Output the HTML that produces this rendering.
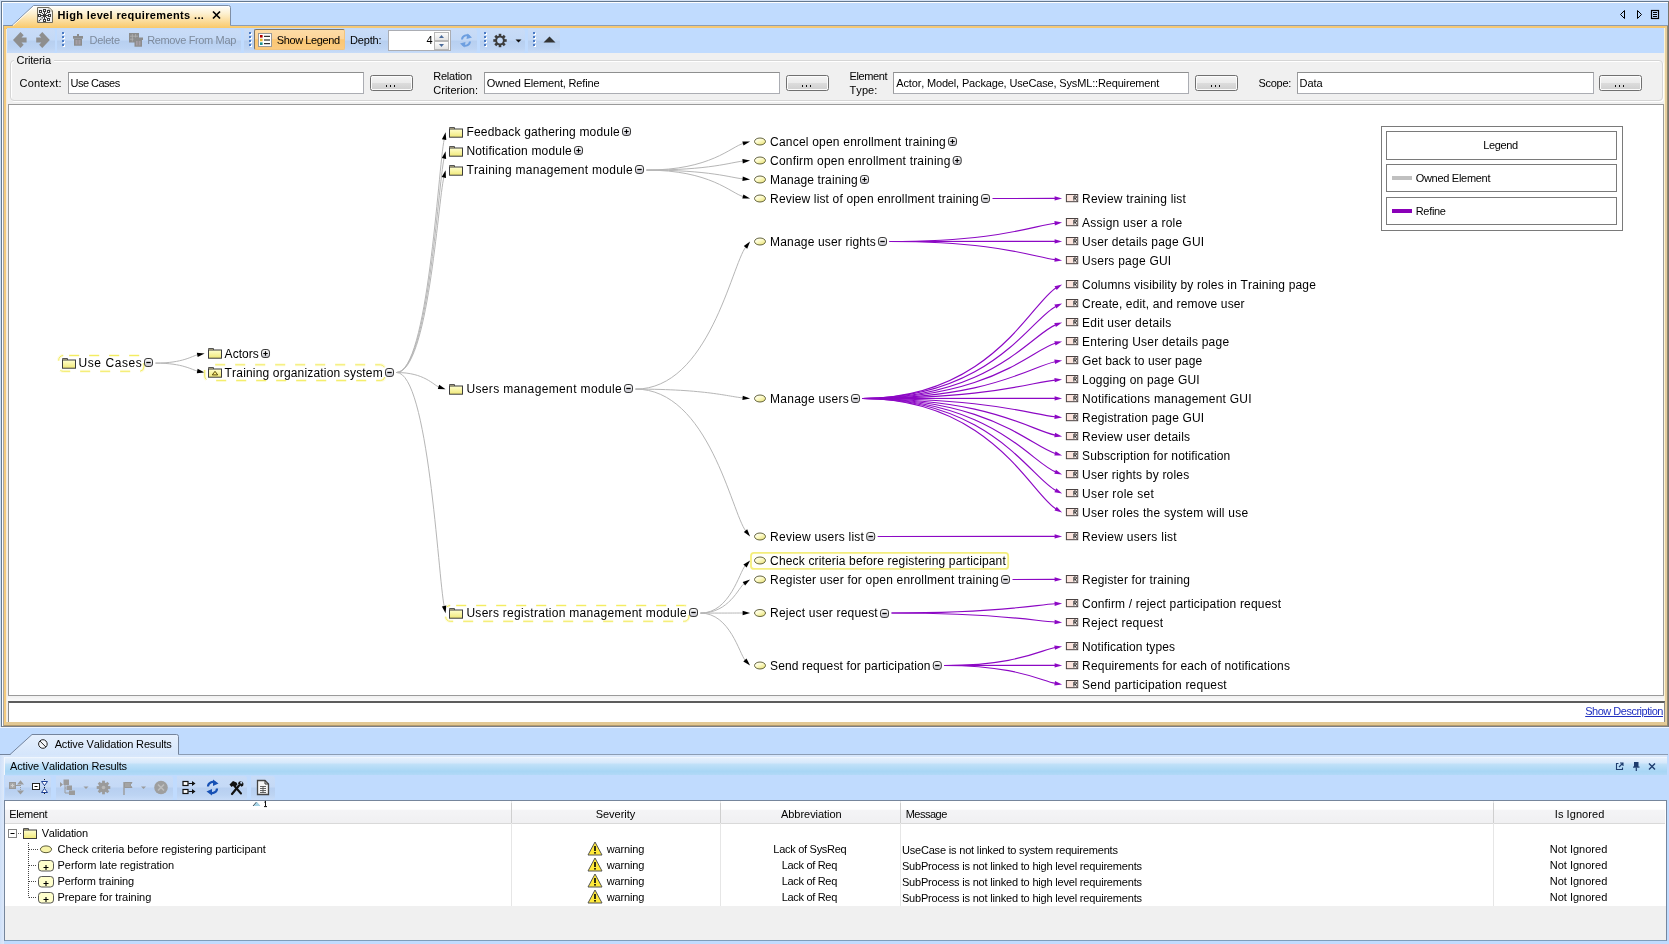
<!DOCTYPE html>
<html><head><meta charset="utf-8"><title>High level requirements</title>
<style>
*{box-sizing:border-box;margin:0;padding:0}
html,body{width:1669px;height:944px;overflow:hidden}
body{font-kerning:none;background:#c0dbfe;font-family:"Liberation Sans",sans-serif;font-size:11px;color:#000;position:relative}
.a{position:absolute}
.t{position:absolute;white-space:nowrap;line-height:14px;height:14px}
svg{position:absolute;overflow:visible}
svg.dg text{font-family:"Liberation Sans",sans-serif;font-size:12px;fill:#000}
.inp{position:absolute;height:22px;background:#fff;border:1px solid #abadb3;border-top-color:#8e8f8f;border-left-color:#9a9b9d}
.inp span{position:absolute;left:2px;top:3px;line-height:14px;white-space:nowrap}
.btn{position:absolute;width:43px;height:16px;border:1px solid #707070;border-radius:2.5px;background:linear-gradient(#f4f4f4 0,#ebebeb 48%,#dcdcdc 52%,#cfcfcf 100%);box-shadow:inset 0 0 0 1px #fbfbfb}
.btn i{position:absolute;left:15px;top:9px;width:11px;height:2px;background:repeating-linear-gradient(90deg,#111 0,#111 1.4px,transparent 1.4px,transparent 4px)}
.sep{position:absolute;width:3px;height:16px;background-image:repeating-linear-gradient(180deg,#4a7ac4 0,#4a7ac4 2px,transparent 2px,transparent 4px),repeating-linear-gradient(180deg,#fff 0,#fff 2px,transparent 2px,transparent 4px);background-position:0 0,1px 1px;background-size:2px 15px,2px 15px;background-repeat:no-repeat}
.dis{color:#7d8a9c}
#w{position:absolute;left:0;top:0;width:1669px;height:944px;will-change:transform}
</style></head><body><div id="w">

<!-- outer frame of document pane -->
<div class="a" style="left:0;top:0;width:1669px;height:1px;background:#d3e1f4"></div>
<div class="a" style="left:0;top:0;width:1px;height:727px;background:#cfdff3"></div>
<div class="a" style="left:1px;top:1px;width:1668px;height:726px;border:1px solid #64788f;border-bottom-color:#7b7f86;border-right-color:#77746c"></div>
<div class="a" style="left:2px;top:2px;width:1666px;height:1px;background:#fff"></div>
<div class="a" style="left:2px;top:2px;width:1px;height:724px;background:#fff"></div>
<!-- tab strip bottom line -->
<div class="a" style="left:3px;top:25px;width:1665px;height:1px;background:#8c9db4"></div>
<!-- orange frame -->
<div class="a" style="left:3px;top:26px;width:1665px;height:700px;border-style:solid;border-width:2px 4px 4px 4px;border-color:#f6c873 #e6cf9c #e2c894 #f2c97e;background:#f0f0f0"></div>
<div class="a" style="left:3px;top:26px;width:1px;height:700px;background:#a7a7a7"></div>
<div class="a" style="left:1667px;top:26px;width:1px;height:700px;background:#8f8672"></div>
<div class="a" style="left:1664px;top:28px;width:1px;height:694px;background:#fdf5d8"></div>
<div class="a" style="left:4px;top:725px;width:1663px;height:1px;background:#b39b6e"></div>
<div class="a" style="left:6px;top:28px;width:1px;height:694px;background:#f8ecd8"></div>
<!-- tab -->
<svg style="left:0;top:0" width="260" height="30" viewBox="0 0 260 30">
<defs><linearGradient id="tg" x1="0" y1="0" x2="0" y2="1"><stop offset="0" stop-color="#ffffff"/><stop offset="0.35" stop-color="#fdf0cf"/><stop offset="1" stop-color="#f9c662"/></linearGradient></defs>
<path d="M4 29V26H12L33.5 5.5H228.5Q230.5 5.5 230.5 7.5V26H260V29Z" fill="url(#tg)"/>
<path d="M3.5 25.5H12L33.5 5.5H228.5Q230.5 5.5 230.5 7.5V25.5" fill="none" stroke="#7f8fa6" stroke-width="1"/>
<path d="M13 25.5L34 6.5H229" fill="none" stroke="#ffffff" stroke-width="1" opacity="0.9"/>
<!-- relation map icon -->
<g transform="translate(37,7)">
<path d="M0.500 0.500H12L15.500 4V15.500H0.500Z" fill="#efefef" stroke="#706c5c" stroke-width="1"/>
<path d="M12 0.500V4H15.500Z" fill="#fff" stroke="#8a8676" stroke-width="0.800"/>
<g fill="none" stroke="#3a3a3a" stroke-width="1"><path d="M7.500 4V13M3 8.500H12M4.500 5.500L10.500 11.500M10.500 5.500L7.500 8.500"/><path d="M7 9L1 15" stroke="#222" stroke-width="1.100" stroke-dasharray="1.200 0.800"/></g>
<g fill="#fff" stroke="#3a3a3a" stroke-width="1">
<rect x="6.500" y="2.500" width="2" height="2"/><rect x="2.500" y="3.500" width="2" height="2"/><rect x="10.500" y="3.500" width="2" height="2"/>
<rect x="1.500" y="7.500" width="2" height="2"/><rect x="11.500" y="7.500" width="2" height="2"/>
<rect x="6.500" y="12.500" width="2" height="2"/><rect x="10.500" y="11.500" width="2" height="2"/></g>
<rect x="6" y="7" width="3" height="3" fill="#3a3a3a"/>
</g>
<path d="M213 11.5L220 18.5M220 11.5L213 18.5" stroke="#000" stroke-width="1.7" fill="none"/>
</svg>
<div class="t" style="left:57.40px;top:7.7px;letter-spacing:0.368px;font-weight:bold;">High level requirements ...</div>
<!-- tab strip right icons -->
<svg style="left:1615px;top:6px" width="50" height="16" viewBox="0 0 50 16">
<path d="M9.5 4.5V12.5L5.5 8.5Z" fill="none" stroke="#000" stroke-width="1"/>
<path d="M22.5 4.5V12.5L26.5 8.5Z" fill="none" stroke="#000" stroke-width="1"/>
<rect x="36.5" y="4.5" width="7" height="8" fill="none" stroke="#000" stroke-width="1.2"/>
<path d="M38 6.5H42M38 8.5H42M38 10.5H42" stroke="#000" stroke-width="1"/>
</svg>
<!-- toolbar -->
<div class="a" style="left:7px;top:28px;width:1657px;height:25px;background:#c0dbfe"></div>
<div class="a tb" style="left:8px;top:29px;width:47px"></div>
<div class="a tb" style="left:57px;top:29px;width:184px"></div>
<div class="a tb" style="left:244px;top:29px;width:233px"></div>
<div class="a tb" style="left:480px;top:29px;width:45px"></div>
<div class="a tb" style="left:528px;top:29px;width:32px"></div>
<style>.tb{height:24px;border-radius:0 3px 3px 0;background:linear-gradient(#c9dcf7 0,#c4d9f6 46%,#b7cff0 50%,#bdd4f3 80%,#c8dcf8 100%)}</style>
<div class="sep" style="left:62px;top:32px"></div>
<div class="sep" style="left:249px;top:32px"></div>
<div class="sep" style="left:484px;top:32px"></div>
<div class="sep" style="left:533px;top:32px"></div>
<svg style="left:8px;top:29px" width="560" height="24" viewBox="0 0 560 24">
<!-- nav arrows -->
<path d="M5 11L12.500 3L15.700 6.300L13.500 8.500H18.600V13.500H13.500L15.700 15.700L12.500 19Z" fill="#8e8e8e"/>
<path d="M41.800 11L34.300 3L31.100 6.300L33.300 8.500H28.200V13.500H33.300L31.100 15.700L34.300 19Z" fill="#8e8e8e"/>
<!-- trash -->
<g fill="#8c8c8c"><rect x="65" y="7" width="10" height="2.700"/><rect x="69" y="5" width="2" height="2"/><path d="M66 9.700H74V16.700H66Z"/></g><rect x="67.500" y="11" width="5" height="4.500" fill="#a59ea6"/>
<path d="M70 11V15.500" stroke="#8c8c8c" stroke-width="1"/>
<!-- remove from map -->
<g fill="#8c8c8c"><rect x="121" y="4" width="10" height="9.500"/><rect x="125.500" y="8.500" width="9.500" height="2.500"/><rect x="126.500" y="11" width="7.500" height="6.700"/></g><rect x="128" y="12" width="4.500" height="4.500" fill="#a59ea6"/><path d="M130.200 12V16.500" stroke="#8c8c8c"/>
<path d="M122 7.200H130M122 10.200H125.500M124.300 5V12.500M127.600 5V8.500" stroke="#b3b3b3" stroke-width="0.800"/>
<!-- gear -->
<g transform="translate(492,11.500)" fill="#3c3c3c"><circle r="4.800"/><g id="teeth"><rect x="-1.300" y="-6.700" width="2.600" height="13.400"/><rect x="-6.700" y="-1.300" width="13.400" height="2.600"/></g><use href="#teeth" transform="rotate(45)"/><circle r="2.900" fill="#c1d7f5"/></g>
<path d="M507.5 10.5H513.5L510.5 13.5Z" fill="#111"/>
<path d="M535.5 13.5H547.5L541.5 7.5Z" fill="#333"/>
<!-- refresh disabled -->
<g fill="none" stroke="#6d9fe0" stroke-width="2"><path d="M454 10.5A4.5 4.5 0 0 1 461.5 7.5"/><path d="M462 12.5A4.5 4.5 0 0 1 454.5 15.5"/></g>
<path d="M459.5 4.5L464 8.5L458.5 10Z" fill="#6d9fe0"/><path d="M456.5 18.5L452 14.5L457.5 13Z" fill="#6d9fe0"/>
</svg>
<div class="t dis" style="left:89.50px;top:32.6px;letter-spacing:-0.259px;">Delete</div>
<div class="t dis" style="left:147.20px;top:32.6px;letter-spacing:-0.360px;">Remove From Map</div>
<!-- show legend button -->
<div class="a" style="left:254px;top:29px;width:91px;height:21px;border:1px solid;border-color:#7c7568 #f3c47c #f3c47c #7c7568;border-radius:2px;background:linear-gradient(#fddcA6 0,#fdd59a 45%,#fbc672 52%,#fbcb80 100%)"></div>
<svg style="left:258px;top:33px" width="14" height="14" viewBox="0 0 14 14">
<rect x="0.500" y="0.500" width="13" height="13" fill="#fff" stroke="#9a9a9a"/>
<rect x="2" y="2" width="2.600" height="2.600" fill="#b00000"/><rect x="2" y="5.700" width="2.600" height="2.600" fill="#e8b830"/><rect x="2" y="9.400" width="2.600" height="2.600" fill="#1f9090"/>
<path d="M6 3.300H12M6 7H12M6 10.700H12" stroke="#000" stroke-width="1"/>
</svg>
<div class="t" style="left:276.70px;top:32.8px;letter-spacing:-0.378px;">Show Legend</div>
<div class="t" style="left:350.00px;top:32.8px;letter-spacing:-0.162px;">Depth:</div>
<div class="a" style="left:388px;top:30px;width:63px;height:21px;background:#fff;border:1px solid #abadb3"></div>
<div class="t" style="left:426.60px;top:32.8px;letter-spacing:-0.718px;">4</div>
<div class="a" style="left:434px;top:32px;width:15px;height:9px;border:1px solid #b8b8b8;background:linear-gradient(#fcfcfc,#e4e4e4)"></div>
<div class="a" style="left:434px;top:41px;width:15px;height:9px;border:1px solid #b8b8b8;background:linear-gradient(#fcfcfc,#e4e4e4)"></div>
<svg style="left:434px;top:32px" width="15" height="18" viewBox="0 0 15 18"><path d="M5 6L7.5 3L10 6Z" fill="#4b6b9a"/><path d="M5 12L7.5 15L10 12Z" fill="#4b6b9a"/></svg>
<!-- criteria panel -->
<div class="a" style="left:7px;top:53px;width:1657px;height:51px;background:#f0f0f0"></div>
<div class="a" style="left:10px;top:60px;width:1653px;height:41px;border:1px solid #d5d5d5;border-radius:4px;box-shadow:inset 1px 1px 0 #fff,1px 1px 0 #fff"></div>
<div class="a" style="left:14px;top:55px;width:40px;height:10px;background:#f0f0f0"></div><div class="t" style="left:16.60px;top:52.8px;letter-spacing:-0.150px;">Criteria</div>
<div class="t" style="left:19.60px;top:75.6px;letter-spacing:0.134px;">Context:</div>
<div class="inp" style="left:68px;top:72px;width:296px"></div><div class="t" style="left:70.50px;top:75.8px;letter-spacing:-0.512px;">Use Cases</div>
<div class="btn" style="left:370px;top:75px"><i></i></div>
<div class="t" style="left:433.25px;top:69.0px;letter-spacing:-0.230px;">Relation</div>
<div class="t" style="left:433.25px;top:82.8px;letter-spacing:0.014px;">Criterion:</div>
<div class="inp" style="left:484px;top:72px;width:296px"></div><div class="t" style="left:486.75px;top:75.8px;letter-spacing:-0.171px;">Owned Element, Refine</div>
<div class="btn" style="left:786px;top:75px"><i></i></div>
<div class="t" style="left:849.50px;top:69.0px;letter-spacing:-0.392px;">Element</div>
<div class="t" style="left:849.50px;top:82.8px;letter-spacing:0.087px;">Type:</div>
<div class="inp" style="left:893px;top:72px;width:296px"></div><div class="t" style="left:896.25px;top:75.8px;letter-spacing:-0.158px;">Actor, Model, Package, UseCase, SysML::Requirement</div>
<div class="btn" style="left:1195px;top:75px"><i></i></div>
<div class="t" style="left:1258.50px;top:76.0px;letter-spacing:-0.289px;">Scope:</div>
<div class="inp" style="left:1297px;top:72px;width:297px"></div><div class="t" style="left:1299.50px;top:75.8px;letter-spacing:-0.012px;">Data</div>
<div class="btn" style="left:1599px;top:75px"><i></i></div>
<!-- diagram panel -->
<div class="a" style="left:8px;top:104px;width:1656px;height:592px;background:#fff;border:1px solid #9a9a9a"></div>
<div class="a" style="left:7px;top:696px;width:1657px;height:5px;background:linear-gradient(#f0f0f0,#fafafa)"></div>
<div class="a" style="left:8px;top:701px;width:1657px;height:21px;background:#fff;border-top:2px solid #5c5c5c;border-left:1px solid #8a8a8a;border-right:1px solid #8a8a8a"></div>
<div class="t" style="left:1585.20px;top:703.8px;letter-spacing:-0.486px;color:#1f2fc0;text-decoration:underline;">Show Description</div>

<svg class="dg" style="left:9px;top:105px" width="1654" height="590" viewBox="0 0 1654 590">
<defs>
<linearGradient id="gy" x1="0" y1="0" x2="0" y2="1"><stop offset="0" stop-color="#ffffd0"/><stop offset="1" stop-color="#f0e878"/></linearGradient>
<linearGradient id="gu" x1="0.1" y1="0" x2="0.9" y2="1"><stop offset="0" stop-color="#ffffff"/><stop offset="0.45" stop-color="#fcfac8"/><stop offset="1" stop-color="#e6df70"/></linearGradient>
<linearGradient id="gt" x1="0" y1="0" x2="0" y2="1"><stop offset="0" stop-color="#ffffff"/><stop offset="1" stop-color="#c8c8d0"/></linearGradient>
<g id="pk"><path d="M0.5 2V0.8H5.5V2.3" fill="#f5e6a0" stroke="#555" stroke-width="1"/><rect x="0.5" y="2.3" width="13" height="8.2" fill="url(#gy)" stroke="#3c3c3c" stroke-width="1"/></g>
<g id="md"><path d="M0.5 2V0.8H5.5V2.3" fill="#f5e6a0" stroke="#555" stroke-width="1"/><rect x="0.5" y="2.3" width="13" height="8.2" fill="url(#gy)" stroke="#3c3c3c" stroke-width="1"/><path d="M4.3 8.2L7 4.6L9.7 8.2Z" fill="#fff27a" stroke="#4a3a00" stroke-width="0.9"/></g>
<g id="ucs"><ellipse cx="6.5" cy="4.5" rx="5.5" ry="3.5" fill="url(#gu)" stroke="#4a4a22" stroke-width="0.85"/></g>
<g id="rq"><rect x="0.5" y="0.5" width="11.3" height="7.2" fill="#fce5de" stroke="#4a4242" stroke-width="1"/><rect x="7" y="1.2" width="4.2" height="5.8" fill="#fff6f3"/><path d="M8 6.600V2H9.600Q10.600 2 10.600 3Q10.600 4.100 9.600 4.100H8M9.300 4.100L10.700 6.600" fill="none" stroke="#1c1c1c" stroke-width="0.950"/></g>
<g id="tm"><rect x="0.5" y="0.5" width="8" height="8" rx="2.6" fill="url(#gt)" stroke="#333" stroke-width="1"/><path d="M2.3 4.5H6.7" stroke="#000" stroke-width="1.3"/></g>
<g id="tp"><rect x="0.5" y="0.5" width="8" height="8" rx="2.6" fill="url(#gt)" stroke="#333" stroke-width="1"/><path d="M2.3 4.5H6.7M4.5 2.3V6.7" stroke="#000" stroke-width="1.2"/></g>
</defs>
<path d="M146.5 258.1C174.3 258.1 183.0 250.9 188.7 249.8" fill="none" stroke="#b6b6b6" stroke-width="1"/>
<polygon points="195.6,248.4 188.7,252.0 187.8,247.7" fill="#000"/>
<path d="M146.5 258.1C174.3 258.1 183.0 265.0 188.7 266.1" fill="none" stroke="#b6b6b6" stroke-width="1"/>
<polygon points="195.6,267.4 187.8,268.2 188.6,263.8" fill="#000"/>
<path d="M387.5 267.5C419.2 267.5 429.1 63.8 435.2 34.2" fill="none" stroke="#b6b6b6" stroke-width="1"/>
<polygon points="436.6,27.3 437.3,35.1 432.9,34.2" fill="#000"/>
<path d="M387.5 267.5C419.1 267.5 429.0 80.4 435.1 53.1" fill="none" stroke="#b6b6b6" stroke-width="1"/>
<polygon points="436.6,46.3 437.1,54.1 432.8,53.1" fill="#000"/>
<path d="M387.5 267.5C419.1 267.5 428.9 97.0 434.9 72.1" fill="none" stroke="#b6b6b6" stroke-width="1"/>
<polygon points="436.6,65.3 437.0,73.1 432.7,72.1" fill="#000"/>
<path d="M387.5 267.5C415.5 267.5 424.3 280.1 430.0 282.0" fill="none" stroke="#b6b6b6" stroke-width="1"/>
<polygon points="436.6,284.3 428.8,284.0 430.2,279.8" fill="#000"/>
<path d="M387.5 267.5C419.2 267.5 429.2 471.8 435.2 501.4" fill="none" stroke="#b6b6b6" stroke-width="1"/>
<polygon points="436.6,508.3 432.9,501.4 437.3,500.5" fill="#000"/>
<path d="M637.5 65.1C701.7 65.1 721.8 41.8 734.4 38.4" fill="none" stroke="#b6b6b6" stroke-width="1"/>
<polygon points="741.1,36.5 734.5,40.6 733.3,36.4" fill="#000"/>
<path d="M637.5 65.1C701.6 65.1 721.6 57.3 734.1 56.1" fill="none" stroke="#b6b6b6" stroke-width="1"/>
<polygon points="741.1,55.5 733.8,58.4 733.4,54.0" fill="#000"/>
<path d="M637.5 65.1C701.6 65.1 721.6 72.7 734.1 73.9" fill="none" stroke="#b6b6b6" stroke-width="1"/>
<polygon points="741.1,74.5 733.4,76.0 733.8,71.6" fill="#000"/>
<path d="M637.5 65.1C701.7 65.1 721.8 88.2 734.3 91.6" fill="none" stroke="#b6b6b6" stroke-width="1"/>
<polygon points="741.1,93.5 733.3,93.6 734.4,89.4" fill="#000"/>
<path d="M626.5 284.1C699.8 284.1 722.8 160.1 736.8 142.0" fill="none" stroke="#b6b6b6" stroke-width="1"/>
<polygon points="741.1,136.5 738.2,143.8 734.8,141.1" fill="#000"/>
<path d="M626.5 284.1C697.9 284.1 720.2 291.8 734.1 292.9" fill="none" stroke="#b6b6b6" stroke-width="1"/>
<polygon points="741.1,293.5 733.4,295.1 733.8,290.7" fill="#000"/>
<path d="M626.5 284.1C699.8 284.1 722.7 407.9 736.8 426.0" fill="none" stroke="#b6b6b6" stroke-width="1"/>
<polygon points="741.1,431.5 734.8,426.9 738.2,424.2" fill="#000"/>
<path d="M691.5 508.1C721.1 508.1 730.4 466.8 736.3 460.6" fill="none" stroke="#b6b6b6" stroke-width="1"/>
<polygon points="741.1,455.5 737.6,462.5 734.4,459.4" fill="#000"/>
<path d="M691.5 508.1C720.4 508.1 729.5 482.4 735.3 478.4" fill="none" stroke="#b6b6b6" stroke-width="1"/>
<polygon points="741.1,474.5 736.1,480.5 733.7,476.9" fill="#000"/>
<path d="M691.5 508.1C719.6 508.1 728.3 508.0 734.1 508.0" fill="none" stroke="#b6b6b6" stroke-width="1"/>
<polygon points="741.1,508.0 733.6,510.2 733.6,505.8" fill="#000"/>
<path d="M691.5 508.1C721.1 508.1 730.4 549.2 736.3 555.4" fill="none" stroke="#b6b6b6" stroke-width="1"/>
<polygon points="741.1,560.5 734.3,556.6 737.5,553.5" fill="#000"/>
<path d="M983.5 93.5C1024.9 93.5 1037.8 93.4 1046.1 93.4" fill="none" stroke="#8c08c4" stroke-width="1.15"/>
<polygon points="1053.1,93.4 1045.6,95.6 1045.6,91.2" fill="#8c08c4"/>
<path d="M880.5 136.5C990.6 136.5 1025.0 120.5 1046.1 118.2" fill="none" stroke="#8c08c4" stroke-width="1.15"/>
<polygon points="1053.1,117.4 1045.9,120.4 1045.4,116.0" fill="#8c08c4"/>
<path d="M880.5 136.5C990.6 136.5 1025.0 136.4 1046.1 136.4" fill="none" stroke="#8c08c4" stroke-width="1.15"/>
<polygon points="1053.1,136.4 1045.6,138.6 1045.6,134.2" fill="#8c08c4"/>
<path d="M880.5 136.5C990.6 136.5 1025.0 152.3 1046.1 154.6" fill="none" stroke="#8c08c4" stroke-width="1.15"/>
<polygon points="1053.1,155.4 1045.4,156.8 1045.9,152.4" fill="#8c08c4"/>
<path d="M853.5 293.5C982.2 293.5 1022.5 196.9 1047.0 182.9" fill="none" stroke="#8c08c4" stroke-width="1.15"/>
<polygon points="1053.1,179.4 1047.7,185.0 1045.5,181.2" fill="#8c08c4"/>
<path d="M853.5 293.5C982.1 293.5 1022.2 213.1 1046.8 201.4" fill="none" stroke="#8c08c4" stroke-width="1.15"/>
<polygon points="1053.1,198.4 1047.3,203.6 1045.4,199.6" fill="#8c08c4"/>
<path d="M853.5 293.5C981.9 293.5 1022.0 229.3 1046.6 219.9" fill="none" stroke="#8c08c4" stroke-width="1.15"/>
<polygon points="1053.1,217.4 1046.9,222.1 1045.3,218.0" fill="#8c08c4"/>
<path d="M853.5 293.5C981.8 293.5 1021.8 245.3 1046.4 238.3" fill="none" stroke="#8c08c4" stroke-width="1.15"/>
<polygon points="1053.1,236.4 1046.5,240.6 1045.3,236.3" fill="#8c08c4"/>
<path d="M853.5 293.5C981.7 293.5 1021.7 261.4 1046.2 256.7" fill="none" stroke="#8c08c4" stroke-width="1.15"/>
<polygon points="1053.1,255.4 1046.1,259.0 1045.3,254.6" fill="#8c08c4"/>
<path d="M853.5 293.5C981.6 293.5 1021.6 277.4 1046.1 275.1" fill="none" stroke="#8c08c4" stroke-width="1.15"/>
<polygon points="1053.1,274.4 1045.8,277.3 1045.4,272.9" fill="#8c08c4"/>
<path d="M853.5 293.5C981.6 293.5 1021.6 293.4 1046.1 293.4" fill="none" stroke="#8c08c4" stroke-width="1.15"/>
<polygon points="1053.1,293.4 1045.6,295.6 1045.6,291.2" fill="#8c08c4"/>
<path d="M853.5 293.5C981.6 293.5 1021.6 309.4 1046.1 311.7" fill="none" stroke="#8c08c4" stroke-width="1.15"/>
<polygon points="1053.1,312.4 1045.4,313.9 1045.8,309.5" fill="#8c08c4"/>
<path d="M853.5 293.5C981.7 293.5 1021.7 325.4 1046.2 330.1" fill="none" stroke="#8c08c4" stroke-width="1.15"/>
<polygon points="1053.1,331.4 1045.3,332.2 1046.1,327.8" fill="#8c08c4"/>
<path d="M853.5 293.5C981.8 293.5 1021.8 341.5 1046.4 348.5" fill="none" stroke="#8c08c4" stroke-width="1.15"/>
<polygon points="1053.1,350.4 1045.3,350.5 1046.5,346.2" fill="#8c08c4"/>
<path d="M853.5 293.5C981.9 293.5 1022.0 357.6 1046.6 366.9" fill="none" stroke="#8c08c4" stroke-width="1.15"/>
<polygon points="1053.1,369.4 1045.3,368.8 1046.9,364.7" fill="#8c08c4"/>
<path d="M853.5 293.5C982.1 293.5 1022.2 373.7 1046.8 385.4" fill="none" stroke="#8c08c4" stroke-width="1.15"/>
<polygon points="1053.1,388.4 1045.4,387.2 1047.3,383.2" fill="#8c08c4"/>
<path d="M853.5 293.5C982.2 293.5 1022.5 389.9 1047.0 403.9" fill="none" stroke="#8c08c4" stroke-width="1.15"/>
<polygon points="1053.1,407.4 1045.5,405.6 1047.7,401.8" fill="#8c08c4"/>
<path d="M868.7 431.5C986.6 431.5 1023.5 431.4 1046.1 431.4" fill="none" stroke="#8c08c4" stroke-width="1.15"/>
<polygon points="1053.1,431.4 1045.6,433.6 1045.6,429.2" fill="#8c08c4"/>
<path d="M1003.5 474.5C1031.6 474.5 1040.3 474.4 1046.1 474.4" fill="none" stroke="#8c08c4" stroke-width="1.15"/>
<polygon points="1053.1,474.4 1045.6,476.6 1045.6,472.2" fill="#8c08c4"/>
<path d="M882.5 508.0C991.2 508.0 1025.2 500.0 1046.1 498.8" fill="none" stroke="#8c08c4" stroke-width="1.15"/>
<polygon points="1053.1,498.4 1045.7,501.0 1045.5,496.6" fill="#8c08c4"/>
<path d="M882.5 508.0C991.2 508.0 1025.2 515.9 1046.1 517.0" fill="none" stroke="#8c08c4" stroke-width="1.15"/>
<polygon points="1053.1,517.4 1045.5,519.2 1045.7,514.8" fill="#8c08c4"/>
<path d="M935.3 560.5C1008.9 560.5 1031.9 544.8 1046.2 542.5" fill="none" stroke="#8c08c4" stroke-width="1.15"/>
<polygon points="1053.1,541.4 1046.0,544.8 1045.3,540.4" fill="#8c08c4"/>
<path d="M935.3 560.5C1008.8 560.5 1031.8 560.4 1046.1 560.4" fill="none" stroke="#8c08c4" stroke-width="1.15"/>
<polygon points="1053.1,560.4 1045.6,562.6 1045.6,558.2" fill="#8c08c4"/>
<path d="M935.3 560.5C1008.9 560.5 1031.9 576.0 1046.2 578.3" fill="none" stroke="#8c08c4" stroke-width="1.15"/>
<polygon points="1053.1,579.4 1045.3,580.4 1046.0,576.0" fill="#8c08c4"/>
<rect x="49.7" y="250.5" width="85.2" height="15.8" rx="4.5" fill="none" stroke="#fbf8b8" stroke-width="3" stroke-dasharray="10 10" stroke-dashoffset="-6" opacity="0.5"/>
<rect x="49.7" y="250.5" width="85.2" height="15.8" rx="4.5" fill="none" stroke="#f3ec62" stroke-width="1" stroke-dasharray="10 10" stroke-dashoffset="-6"/>
<use href="#pk" x="53.0" y="252.7"/>
<text x="69.6" y="261.7" textLength="63.1">Use Cases</text>
<use href="#tm" x="135.0" y="253.0"/>
<use href="#pk" x="199.0" y="242.7"/>
<text x="215.6" y="252.7" textLength="34.1">Actors</text>
<use href="#tp" x="252.0" y="244.0"/>
<rect x="195.7" y="259.8" width="180.2" height="15.8" rx="4.5" fill="none" stroke="#fbf8b8" stroke-width="3" stroke-dasharray="10 10" stroke-dashoffset="-6" opacity="0.5"/>
<rect x="195.7" y="259.8" width="180.2" height="15.8" rx="4.5" fill="none" stroke="#f3ec62" stroke-width="1" stroke-dasharray="10 10" stroke-dashoffset="-6"/>
<use href="#md" x="199.0" y="261.7"/>
<text x="215.6" y="271.7" textLength="158.1">Training organization system</text>
<use href="#tm" x="376.0" y="263.0"/>
<use href="#pk" x="440.0" y="21.7"/>
<text x="457.4" y="30.7" textLength="153.3">Feedback gathering module</text>
<use href="#tp" x="613.0" y="22.0"/>
<use href="#pk" x="440.0" y="40.7"/>
<text x="457.4" y="49.7" textLength="105.3">Notification module</text>
<use href="#tp" x="565.0" y="41.0"/>
<use href="#pk" x="440.0" y="59.7"/>
<text x="457.4" y="68.7" textLength="166.3">Training management module</text>
<use href="#tm" x="626.0" y="60.0"/>
<use href="#pk" x="440.0" y="278.7"/>
<text x="457.4" y="287.7" textLength="155.3">Users management module</text>
<use href="#tm" x="615.0" y="279.0"/>
<rect x="436.7" y="500.5" width="243.2" height="15.8" rx="4.5" fill="none" stroke="#fbf8b8" stroke-width="3" stroke-dasharray="10 10" stroke-dashoffset="-6" opacity="0.5"/>
<rect x="436.7" y="500.5" width="243.2" height="15.8" rx="4.5" fill="none" stroke="#f3ec62" stroke-width="1" stroke-dasharray="10 10" stroke-dashoffset="-6"/>
<use href="#pk" x="440.0" y="502.7"/>
<text x="457.4" y="511.7" textLength="220.3">Users registration management module</text>
<use href="#tm" x="680.0" y="503.0"/>
<use href="#ucs" x="744.5" y="32.0"/>
<text x="761.1" y="40.7" textLength="175.6">Cancel open enrollment training</text>
<use href="#tp" x="939.0" y="32.0"/>
<use href="#ucs" x="744.5" y="51.0"/>
<text x="761.1" y="59.7" textLength="180.3">Confirm open enrollment training</text>
<use href="#tp" x="943.7" y="51.0"/>
<use href="#ucs" x="744.5" y="70.0"/>
<text x="761.1" y="78.7" textLength="87.6">Manage training</text>
<use href="#tp" x="851.0" y="70.0"/>
<use href="#ucs" x="744.5" y="89.0"/>
<text x="761.1" y="97.7" textLength="208.6">Review list of open enrollment training</text>
<use href="#tm" x="972.0" y="89.0"/>
<use href="#ucs" x="744.5" y="132.0"/>
<text x="761.1" y="140.7" textLength="105.6">Manage user rights</text>
<use href="#tm" x="869.0" y="132.0"/>
<use href="#ucs" x="744.5" y="289.0"/>
<text x="761.1" y="297.7" textLength="78.6">Manage users</text>
<use href="#tm" x="842.0" y="289.0"/>
<use href="#ucs" x="744.5" y="427.0"/>
<text x="761.1" y="435.7" textLength="93.8">Review users list</text>
<use href="#tm" x="857.2" y="427.0"/>
<rect x="742.0" y="447.9" width="257.2" height="16" rx="3" fill="#fffffa" stroke="#f4ee7c" stroke-width="1.8"/>
<use href="#ucs" x="744.5" y="451.0"/>
<text x="761.1" y="459.7" textLength="235.7">Check criteria before registering participant</text>
<use href="#ucs" x="744.5" y="470.0"/>
<text x="761.1" y="478.7" textLength="228.6">Register user for open enrollment training</text>
<use href="#tm" x="992.0" y="470.0"/>
<use href="#ucs" x="744.5" y="503.5"/>
<text x="761.1" y="512.2" textLength="107.6">Reject user request</text>
<use href="#tm" x="871.0" y="504.0"/>
<use href="#ucs" x="744.5" y="556.0"/>
<text x="761.1" y="564.7" textLength="160.4">Send request for participation</text>
<use href="#tm" x="923.8" y="556.0"/>
<use href="#rq" x="1056.9" y="89.0"/>
<text x="1073.1" y="97.6" textLength="103.8">Review training list</text>
<use href="#rq" x="1056.9" y="113.0"/>
<text x="1073.1" y="121.6" textLength="100.1">Assign user a role</text>
<use href="#rq" x="1056.9" y="132.0"/>
<text x="1073.1" y="140.6" textLength="122.0">User details page GUI</text>
<use href="#rq" x="1056.9" y="151.0"/>
<text x="1073.1" y="159.6" textLength="89.1">Users page GUI</text>
<use href="#rq" x="1056.9" y="175.0"/>
<text x="1073.1" y="183.6" textLength="233.8">Columns visibility by roles in Training page</text>
<use href="#rq" x="1056.9" y="194.0"/>
<text x="1073.1" y="202.6" textLength="162.5">Create, edit, and remove user</text>
<use href="#rq" x="1056.9" y="213.0"/>
<text x="1073.1" y="221.6" textLength="89.1">Edit user details</text>
<use href="#rq" x="1056.9" y="232.0"/>
<text x="1073.1" y="240.6" textLength="147.0">Entering User details page</text>
<use href="#rq" x="1056.9" y="251.0"/>
<text x="1073.1" y="259.6" textLength="120.0">Get back to user page</text>
<use href="#rq" x="1056.9" y="270.0"/>
<text x="1073.1" y="278.6" textLength="117.6">Logging on page GUI</text>
<use href="#rq" x="1056.9" y="289.0"/>
<text x="1073.1" y="297.6" textLength="169.4">Notifications management GUI</text>
<use href="#rq" x="1056.9" y="308.0"/>
<text x="1073.1" y="316.6" textLength="122.1">Registration page GUI</text>
<use href="#rq" x="1056.9" y="327.0"/>
<text x="1073.1" y="335.6" textLength="108.0">Review user details</text>
<use href="#rq" x="1056.9" y="346.0"/>
<text x="1073.1" y="354.6" textLength="148.2">Subscription for notification</text>
<use href="#rq" x="1056.9" y="365.0"/>
<text x="1073.1" y="373.6" textLength="107.1">User rights by roles</text>
<use href="#rq" x="1056.9" y="384.0"/>
<text x="1073.1" y="392.6" textLength="71.8">User role set</text>
<use href="#rq" x="1056.9" y="403.0"/>
<text x="1073.1" y="411.6" textLength="166.1">User roles the system will use</text>
<use href="#rq" x="1056.9" y="427.0"/>
<text x="1073.1" y="435.6" textLength="94.6">Review users list</text>
<use href="#rq" x="1056.9" y="470.0"/>
<text x="1073.1" y="478.6" textLength="107.9">Register for training</text>
<use href="#rq" x="1056.9" y="494.0"/>
<text x="1073.1" y="502.6" textLength="198.9">Confirm / reject participation request</text>
<use href="#rq" x="1056.9" y="513.0"/>
<text x="1073.1" y="521.6" textLength="81.0">Reject request</text>
<use href="#rq" x="1056.9" y="537.0"/>
<text x="1073.1" y="545.6" textLength="92.8">Notification types</text>
<use href="#rq" x="1056.9" y="556.0"/>
<text x="1073.1" y="564.6" textLength="207.8">Requirements for each of notifications</text>
<use href="#rq" x="1056.9" y="575.0"/>
<text x="1073.1" y="583.6" textLength="144.6">Send participation request</text>
</svg>
<!-- legend -->
<div class="a" style="left:1381px;top:126px;width:242px;height:105px;border:1px solid #7a7a7a;background:#fff"></div>
<div class="a" style="left:1386px;top:131px;width:231px;height:29px;border:1px solid #7a7a7a;background:#fff"></div>
<div class="a" style="left:1386px;top:164px;width:231px;height:28px;border:1px solid #7a7a7a;background:#fff"></div>
<div class="a" style="left:1386px;top:197px;width:231px;height:28px;border:1px solid #7a7a7a;background:#fff"></div>
<div class="t" style="left:1483.30px;top:137.6px;letter-spacing:-0.361px;">Legend</div>
<div class="a" style="left:1392px;top:176px;width:20px;height:4px;background:#c0c0c0"></div>
<div class="t" style="left:1415.70px;top:170.6px;letter-spacing:-0.289px;">Owned Element</div>
<div class="a" style="left:1392px;top:209px;width:20px;height:4px;background:#8a00b8"></div>
<div class="t" style="left:1415.70px;top:203.8px;letter-spacing:-0.299px;">Refine</div>

<!-- bottom pane -->
<div class="a" style="left:0;top:754px;width:1668px;height:1px;background:#8c9db4"></div>
<svg style="left:0;top:730px" width="200" height="28" viewBox="0 0 200 28">
<defs><linearGradient id="bt" x1="0" y1="0" x2="0" y2="1"><stop offset="0" stop-color="#e6f0fd"/><stop offset="1" stop-color="#d2e4fb"/></linearGradient></defs>
<path d="M3 28V25H10L32 4.5H176.5Q178.5 4.5 178.5 6.5V25H200V28Z" fill="url(#bt)"/>
<path d="M0 24.5H10L32 4.5H176.5Q178.5 4.5 178.5 6.5V24.5" fill="none" stroke="#74849c" stroke-width="1"/>
<circle cx="42.900" cy="14" r="4.300" fill="#f4f6fa" stroke="#222" stroke-width="1"/>
<path d="M39.900 11L45.900 17" stroke="#222" stroke-width="1"/>
</svg>
<div class="t" style="left:54.70px;top:736.5px;letter-spacing:-0.164px;">Active Validation Results</div>
<!-- panel -->
<div class="a" style="left:0;top:727px;width:1669px;height:1px;background:#eef4fd"></div>
<div class="a" style="left:3px;top:755px;width:1664px;height:186px;background:#c0dbfe;border-left:1px solid #e8f1fc"></div>
<div class="a" style="left:0;top:755px;width:4px;height:189px;background:linear-gradient(90deg,#cfe0f8,#dde9fa)"></div>
<div class="a" style="left:4px;top:755px;width:1663px;height:2px;background:#d8e7fb"></div>
<div class="a" style="left:4px;top:757px;width:1663px;height:18px;background:linear-gradient(#f6fafe 0,#e4effc 8%,#d8e9fb 30%,#bfe0f8 42%,#a8d6f5 80%,#b2d9f7 100%);border-left:1px solid #f2f7fd"></div>
<div class="t" style="left:10.00px;top:758.7px;letter-spacing:-0.164px;">Active Validation Results</div>
<svg style="left:1612px;top:760px" width="48" height="12" viewBox="0 0 48 12">
<g fill="none" stroke="#1e3c6e" stroke-width="1.1"><path d="M6.5 3.5H4.5V9.5H10.5V7.5"/><path d="M7 7L11 3M8 3H11V6"/></g>
<g fill="#1e3c6e"><rect x="22" y="2" width="4.5" height="5"/><rect x="21" y="6.5" width="6.5" height="1.2"/><rect x="23.7" y="7.5" width="1.2" height="3.5"/></g>
<path d="M37 3.5L43 9.5M43 3.5L37 9.5" stroke="#1e3c6e" stroke-width="1.4" fill="none"/>
</svg>
<!-- bottom toolbar groups -->
<div class="a tb" style="left:5px;top:776px;width:46px"></div>
<div class="a tb" style="left:56px;top:776px;width:117px"></div>
<div class="a tb" style="left:177px;top:776px;width:70px"></div>
<div class="a tb" style="left:251px;top:776px;width:24px"></div>
<svg style="left:0;top:776px" width="280" height="24" viewBox="0 0 280 24">
<!-- expand (disabled) -->
<rect x="9.500" y="6.500" width="6" height="6" fill="#a8a8a8" stroke="#989898"/><path d="M10.800 9.500H14.200M12.500 7.800V11.200" stroke="#cfcfcf" stroke-width="1"/>
<path d="M16 9.500H20" stroke="#9b9b9b"/><path d="M20.500 9V15" stroke="#9b9b9b" stroke-dasharray="1 1"/>
<path d="M17 8.500L20.500 4.200L24 8.500ZM17 14.500L20.500 18.500L24 14.500Z" fill="#9b9b9b"/>
<!-- collapse -->
<rect x="32.500" y="7.500" width="7" height="6" fill="#fff" stroke="#222"/><path d="M34.500 10.500H37.500" stroke="#000"/>
<path d="M44.500 3V19" stroke="#222" stroke-dasharray="1 1"/>
<path d="M41.500 5.500H47.500L44.500 9.500ZM41.500 16.500H47.500L44.500 12.500Z" fill="#fff" stroke="#1c3f94" stroke-width="1"/>
<!-- tree (disabled) -->
<g fill="#9b9b9b"><path d="M60 6L63 8.500L60 11Z"/><rect x="63.500" y="3.500" width="5.500" height="5.500"/><rect x="66.500" y="9.500" width="5.500" height="4.500"/><rect x="69" y="14.500" width="6" height="4.500"/><path d="M83.500 10.500H88.500L86 13Z"/></g>
<path d="M65 9V17H69M65 12H66" stroke="#9b9b9b" fill="none"/>
<!-- gear disabled -->
<g transform="translate(103.500,11.500)" fill="#9b9b9b"><circle r="5"/><rect x="-1.400" y="-6.800" width="2.800" height="13.600"/><rect x="-6.800" y="-1.400" width="13.600" height="2.800"/><g transform="rotate(45)"><rect x="-1.400" y="-6.800" width="2.800" height="13.600"/><rect x="-6.800" y="-1.400" width="13.600" height="2.800"/></g><circle r="1.800" fill="#b9b9b9"/></g>
<!-- flag disabled -->
<path d="M124 6V19" stroke="#9b9b9b" stroke-width="1.400"/><path d="M124.500 6.500H132L130 9L132 11.500H124.500Z" fill="#a4a4a4" stroke="#979797"/>
<path d="M141 10.500H146L143.500 13Z" fill="#9b9b9b"/>
<!-- circle x disabled -->
<circle cx="161" cy="11.500" r="6.800" fill="#9e9e9e"/><path d="M158 8.500L164 14.500M164 8.500L158 14.500" stroke="#bdbdbd" stroke-width="1.600"/>
<!-- boxes with arrows -->
<g fill="#fff" stroke="#111" stroke-width="1.200"><rect x="183" y="5.500" width="5" height="4"/><rect x="183" y="13.500" width="5" height="4"/></g>
<path d="M188.500 7.500H193M188.500 15.500H193" stroke="#111" stroke-width="1.200"/><path d="M192 5L195.500 7.500L192 10ZM192 13L195.500 15.500L192 18Z" fill="#111"/>
<!-- refresh -->
<g fill="none" stroke="#1650b4" stroke-width="2.200"><path d="M208 10.500A4.600 4.600 0 0 1 215.500 7"/><path d="M217 12.500A4.600 4.600 0 0 1 209.500 16"/></g>
<path d="M213 3.500L218.500 7.500L213 10Z" fill="#1650b4"/><path d="M212 19.500L206.500 15.500L212 13Z" fill="#1650b4"/>
<!-- tools -->
<g stroke="#111" fill="none" stroke-linecap="round"><path d="M232 18L239 9.500" stroke-width="2.200"/><path d="M234 9.500L241 17.500" stroke-width="2"/></g>
<path d="M229.500 8.500L233 5L236.500 6.500L237.500 8.500L235.500 10.500L233.500 9.500L231.500 11Z" fill="#111"/>
<path d="M238 7.500A2.800 2.800 0 1 1 241.500 10.800L239.800 9.200Z" fill="#111"/><circle cx="241.300" cy="6.700" r="1.100" fill="#c0d6f4"/>
<!-- doc -->
<path d="M257.500 4.500H265L268.500 8V18.500H257.500Z" fill="#f4f4f4" stroke="#444" stroke-width="1.300"/><path d="M265 4.500V8H268.500" fill="none" stroke="#333"/>
<path d="M260 10.500H266M260 12.500H266M260 14.500H266M260 16.500H266M263 10V17" stroke="#555" stroke-width="0.900"/>
</svg>
<!-- table -->
<div class="a" style="left:4px;top:800px;width:1663px;height:141px;background:#f0f0f0;border:1px solid #76869c;border-bottom-color:#7f9db9"></div>
<div class="a" style="left:5px;top:801px;width:1661px;height:105px;background:#fff"></div>
<div class="a" style="left:5px;top:801px;width:1660px;height:23px;background:linear-gradient(#ffffff 0,#ffffff 37%,#f4f4f6 43%,#f0f0f2 100%);border-bottom:1px solid #d9d9d9"></div>
<div class="a vs" style="left:511px"></div><div class="a vs" style="left:720px"></div><div class="a vs" style="left:900px"></div><div class="a vs" style="left:1493px"></div>
<style>.vs{top:801px;width:1px;height:105px;background:#e6e6e6}.vs:before{content:"";position:absolute;left:0;top:2px;width:1px;height:20px;background:#cfcfcf}.r{position:absolute;white-space:nowrap;line-height:14px;height:14px}</style>
<div class="t" style="left:9.20px;top:806.6px;letter-spacing:-0.342px;">Element</div>
<svg style="left:252px;top:800px" width="20" height="9" viewBox="0 0 20 9"><path d="M1 6L4.500 2L8 6Z" fill="#a6d4e6"/><path d="M1 6L4.500 2" stroke="#4a5560" stroke-width="1" fill="none"/><path d="M4.500 2L8 6" stroke="#8fc4da" stroke-width="0.800" fill="none"/><path d="M13.500 1V6.500M12.300 2.300L13.500 1.200M12 6.600H15" stroke="#111" stroke-width="1" fill="none"/></svg>
<div class="t" style="left:595.70px;top:806.7px;letter-spacing:-0.019px;">Severity</div>
<div class="t" style="left:781.00px;top:806.7px;letter-spacing:-0.041px;">Abbreviation</div>
<div class="t" style="left:905.70px;top:806.7px;letter-spacing:-0.506px;">Message</div>
<div class="t" style="left:1554.80px;top:806.7px;letter-spacing:0.064px;">Is Ignored</div>
<!-- tree -->
<svg style="left:0;top:824px" width="60" height="84" viewBox="0 0 60 84">
<defs><linearGradient id="gy2" x1="0" y1="0" x2="0" y2="1"><stop offset="0" stop-color="#ffffd0"/><stop offset="1" stop-color="#f0e878"/></linearGradient></defs>
<rect x="8.500" y="5.500" width="8" height="8" fill="#fff" stroke="#848484"/><path d="M10.500 9.500H14.500" stroke="#000"/>
<path d="M18 9.500H22" stroke="#666" stroke-dasharray="1 1"/>
<path d="M23.500 6V4.500H28.500V6" fill="#f5e6a0" stroke="#555"/><rect x="23.500" y="6" width="13" height="8.500" fill="url(#gy2)" stroke="#3c3c3c"/>
<path d="M28.500 19V73.500M29 25.500H38M29 41.500H37M29 57.500H37M29 73.500H37" stroke="#444" stroke-dasharray="1 1" fill="none"/>
<ellipse cx="46" cy="25.300" rx="5.600" ry="3.400" fill="#f7f3a8" stroke="#4a4a28" stroke-width="0.900"/>
<g fill="#ffffcc" stroke="#444" stroke-width="0.900"><rect x="38.500" y="36.500" width="15" height="10.500" rx="3"/><rect x="38.500" y="52.500" width="15" height="10.500" rx="3"/><rect x="38.500" y="68.500" width="15" height="10.500" rx="3"/></g>
<path d="M43.500 43.500H48.500M46 41V46M43.500 59.500H48.500M46 57V62M43.500 75.500H48.500M46 73V78" stroke="#000" stroke-width="1.100"/>
</svg>
<div class="t" style="left:41.70px;top:825.7px;letter-spacing:-0.222px;">Validation</div>
<div class="t" style="left:57.50px;top:841.6px;letter-spacing:-0.032px;">Check criteria before registering participant</div>
<div class="t" style="left:57.50px;top:857.7px;letter-spacing:-0.028px;">Perform late registration</div>
<div class="t" style="left:57.50px;top:873.7px;letter-spacing:-0.103px;">Perform training</div>
<div class="t" style="left:57.50px;top:889.7px;letter-spacing:-0.019px;">Prepare for training</div>
<svg style="left:587px;top:841px" width="16" height="15" viewBox="0 0 16 15"><path d="M8 1L15 14H1Z" fill="#ffe93a" stroke="#555" stroke-width="1" stroke-linejoin="round"/><path d="M8 5V10" stroke="#000" stroke-width="1.600"/><rect x="7.200" y="11" width="1.600" height="1.600" fill="#000"/></svg>
<svg style="left:587px;top:857px" width="16" height="15" viewBox="0 0 16 15"><path d="M8 1L15 14H1Z" fill="#ffe93a" stroke="#555" stroke-width="1" stroke-linejoin="round"/><path d="M8 5V10" stroke="#000" stroke-width="1.600"/><rect x="7.200" y="11" width="1.600" height="1.600" fill="#000"/></svg>
<svg style="left:587px;top:873px" width="16" height="15" viewBox="0 0 16 15"><path d="M8 1L15 14H1Z" fill="#ffe93a" stroke="#555" stroke-width="1" stroke-linejoin="round"/><path d="M8 5V10" stroke="#000" stroke-width="1.600"/><rect x="7.200" y="11" width="1.600" height="1.600" fill="#000"/></svg>
<svg style="left:587px;top:889px" width="16" height="15" viewBox="0 0 16 15"><path d="M8 1L15 14H1Z" fill="#ffe93a" stroke="#555" stroke-width="1" stroke-linejoin="round"/><path d="M8 5V10" stroke="#000" stroke-width="1.600"/><rect x="7.200" y="11" width="1.600" height="1.600" fill="#000"/></svg>
<div class="t" style="left:606.72px;top:842.0px;letter-spacing:-0.156px;">warning</div>
<div class="t" style="left:773.30px;top:842.0px;letter-spacing:-0.280px;">Lack of SysReq</div>
<div class="t" style="left:901.90px;top:843.0px;letter-spacing:-0.178px;">UseCase is not linked to system requirements</div>
<div class="t" style="left:1549.70px;top:842.0px;letter-spacing:0.012px;">Not Ignored</div>
<div class="t" style="left:606.72px;top:858.0px;letter-spacing:-0.156px;">warning</div>
<div class="t" style="left:781.70px;top:858.0px;letter-spacing:-0.310px;">Lack of Req</div>
<div class="t" style="left:901.90px;top:859.0px;letter-spacing:-0.187px;">SubProcess is not linked to high level requirements</div>
<div class="t" style="left:1549.70px;top:858.0px;letter-spacing:0.012px;">Not Ignored</div>
<div class="t" style="left:606.72px;top:874.0px;letter-spacing:-0.156px;">warning</div>
<div class="t" style="left:781.70px;top:874.0px;letter-spacing:-0.310px;">Lack of Req</div>
<div class="t" style="left:901.90px;top:875.0px;letter-spacing:-0.187px;">SubProcess is not linked to high level requirements</div>
<div class="t" style="left:1549.70px;top:874.0px;letter-spacing:0.012px;">Not Ignored</div>
<div class="t" style="left:606.72px;top:890.0px;letter-spacing:-0.156px;">warning</div>
<div class="t" style="left:781.70px;top:890.0px;letter-spacing:-0.310px;">Lack of Req</div>
<div class="t" style="left:901.90px;top:891.0px;letter-spacing:-0.187px;">SubProcess is not linked to high level requirements</div>
<div class="t" style="left:1549.70px;top:890.0px;letter-spacing:0.012px;">Not Ignored</div>

</div></body></html>
